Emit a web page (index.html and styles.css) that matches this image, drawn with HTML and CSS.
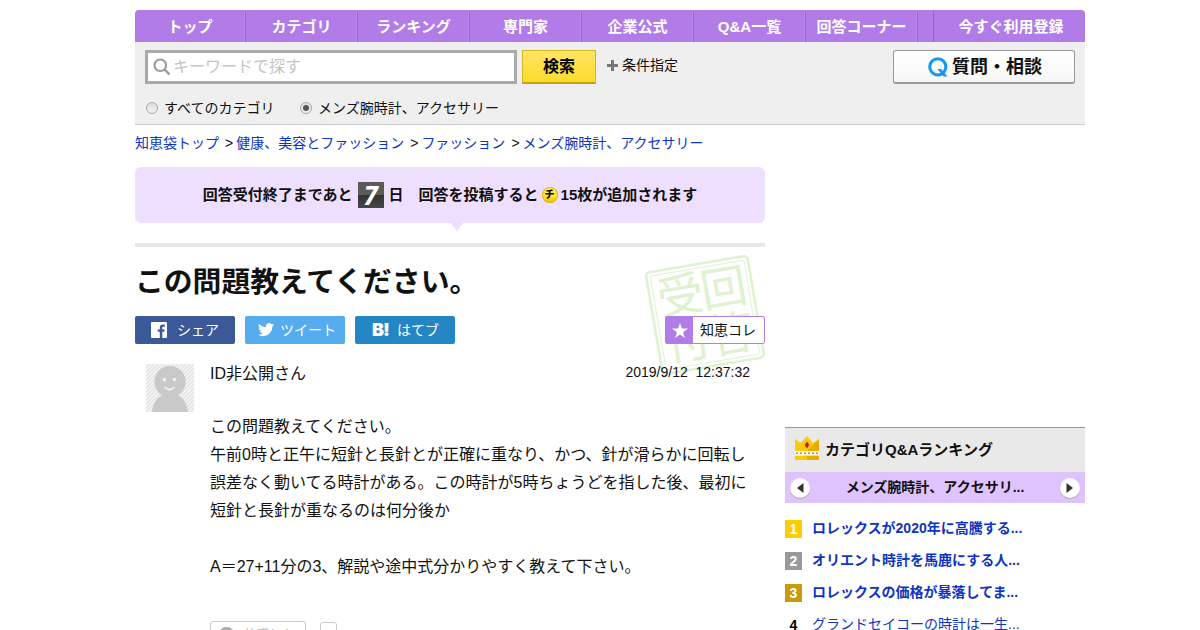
FILE: index.html
```html
<!DOCTYPE html>
<html lang="ja">
<head>
<meta charset="utf-8">
<title>この問題教えてください。</title>
<link rel="stylesheet" href="styles.css">
</head>
<body>
<div class="page">
  <nav class="nav">
    <a>トップ</a><a>カテゴリ</a><a>ランキング</a><a>専門家</a><a>企業公式</a><a>Q&amp;A一覧</a><a>回答コーナー</a>
    <span class="nav-gap"></span>
    <a class="nav-register">今すぐ利用登録</a>
  </nav>
  <section class="search">
    <div class="search-row">
      <div class="search-box">
        <svg width="18" height="18" viewBox="0 0 18 18"><circle cx="7.3" cy="7.3" r="5.8" fill="none" stroke="#999" stroke-width="2"/><path d="M11.5 11.5L16.5 16.5" stroke="#999" stroke-width="2.4"/></svg>
        <span>キーワードで探す</span>
      </div>
      <button class="search-button">検索</button>
      <a class="condition"><svg width="11" height="11"><path d="M5.5 0V11M0 5.5H11" stroke="#777" stroke-width="3"/></svg>条件指定</a>
      <a class="ask"><svg width="20" height="20" viewBox="0 0 20 20"><circle cx="9.8" cy="9.8" r="8.1" fill="none" stroke="#1396f5" stroke-width="3"/><path d="M9.5 12H13L19.5 19.5H15.5Z" fill="#1396f5"/></svg>質問・相談</a>
    </div>
    <div class="scope">
      <label class="scope-all"><i class="radio"></i><span>すべてのカテゴリ</span></label>
      <label><i class="radio checked"></i><span>メンズ腕時計、アクセサリー</span></label>
    </div>
  </section>
  <div class="crumbs"><a>知恵袋トップ</a><i>&gt;</i><a>健康、美容とファッション</a><i>&gt;</i><a>ファッション</a><i>&gt;</i><a>メンズ腕時計、アクセサリー</a></div>
  <div class="columns">
    <main class="main">
      <div class="notice">
        <span>回答受付終了まであと</span><b class="days">7</b><span>日　回答を投稿すると</span><b class="coin">チ</b><span>15枚が追加されます</span>
      </div>
      <article class="question">
        <svg class="stamp" width="122" height="122" viewBox="0 0 122 122">
          <g transform="rotate(-9.7 61 61)" fill="none" stroke="#dff2cf">
            <rect x="9.5" y="9.5" width="103" height="103" rx="4" stroke-width="2.6"/>
            <rect x="13.5" y="13.5" width="95" height="95" rx="2" stroke-width="1"/>
            <g class="stamp-text"><text x="17" y="54">受</text><text x="61" y="54">回</text><text x="17" y="101">付</text><text x="61" y="101">答</text></g>
          </g>
        </svg>
        <h1>この問題教えてください。</h1>
        <div class="share">
          <a class="facebook"><svg width="16" height="16" viewBox="0 0 16 16"><path fill="#fff" d="M1 0H15Q16 0 16 1V15Q16 16 15 16H11.3V9.8H13.4L13.7 7.4H11.3V5.9C11.3 5.2 11.5 4.7 12.5 4.7H13.8V2.5C13.5 2.5 12.8 2.4 11.9 2.4C10 2.4 8.8 3.6 8.8 5.6V7.4H6.7V9.8H8.8V16H1Q0 16 0 15V1Q0 0 1 0Z"/></svg>シェア</a>
          <a class="twitter"><svg width="16" height="14" viewBox="0 2.5 24 20"><path fill="#fff" d="M24 4.6a10 10 0 0 1-2.8.8 5 5 0 0 0 2.1-2.7 10 10 0 0 1-3.1 1.2 4.9 4.9 0 0 0-8.4 4.5A14 14 0 0 1 1.7 3.2a4.9 4.9 0 0 0 1.5 6.5 5 5 0 0 1-2.2-.6v.1a4.9 4.9 0 0 0 3.9 4.8 5 5 0 0 1-2.2.1 4.9 4.9 0 0 0 4.6 3.4A9.9 9.9 0 0 1 0 19.5a14 14 0 0 0 7.5 2.2c9.1 0 14-7.5 14-14v-.6A10 10 0 0 0 24 4.6Z"/></svg>ツイート</a>
          <a class="hatena"><b>B!</b>はてブ</a>
          <a class="collect"><span class="star"><svg width="16" height="15" viewBox="0 0 16 15"><path fill="#fff" d="M8 0L9.9 5.5H16L11.1 9.2L12.9 15L8 11.5L3.1 15L4.9 9.2L0 5.5H6.1Z"/></svg></span><span class="collect-label">知恵コレ</span></a>
        </div>
        <div class="post">
          <svg class="avatar" width="48" height="48" viewBox="0 0 48 48">
            <defs><pattern id="hatch" width="4" height="4" patternUnits="userSpaceOnUse"><rect width="4" height="4" fill="#f4f4f4"/><path d="M-1 1L1 -1M0 4L4 0M3 5L5 3" stroke="#e1e1e1" stroke-width="1.2"/></pattern></defs>
            <rect width="48" height="48" fill="url(#hatch)"/>
            <path fill="#c9c9c9" d="M6 48C7 39 11 34 16 31A15.6 15.6 0 1 1 32 31C37 34 41 39 42 48Z"/>
            <circle cx="18.5" cy="15.5" r="1.7" fill="#f4f4f4"/><circle cx="28.5" cy="15.5" r="1.7" fill="#f4f4f4"/><path d="M18.500 23Q23.500 28 28.500 23" fill="none" stroke="#f4f4f4" stroke-width="1.6"/>
          </svg>
          <div class="post-body">
            <div class="post-head"><span>ID非公開さん</span><time>2019/9/12&nbsp; 12:37:32</time></div>
            <p>この問題教えてください。<br>午前0時と正午に短針と長針とが正確に重なり、かつ、針が滑らかに回転し<br>誤差なく動いてる時計がある。この時計が5時ちょうどを指した後、最初に<br>短針と長針が重なるのは何分後か<br><br>A＝27+11分の3、解説や途中式分かりやすく教えて下さい。</p>
            <div class="reaction"><span class="me-too"><i></i>共感した</span><span class="count"></span></div>
          </div>
        </div>
      </article>
    </main>
    <aside class="side">
      <h2><svg width="24" height="24" viewBox="0 0 24 24"><path fill="#fdc810" d="M0 3L6 7L12 0L18 7L24 3V15H0ZM0 19.5H24V24H0Z"/><path fill="#e8ab00" d="M12 15L24 3V15ZM12 19.5H24V24H12Z"/><path fill="#fff9df" d="M0 15H24V19.5H0Z"/><path d="M1 17.2H23" stroke="#a99545" stroke-width="1.6" stroke-dasharray="2 2"/><path fill="#c71920" d="M12 5.5L14.2 9L12 12.5L9.8 9Z"/></svg>カテゴリQ&amp;Aランキング</h2>
      <div class="switcher">
        <span class="arrow"><svg width="7" height="10"><path d="M6.5 0V10L0 5Z" fill="#333"/></svg></span>
        <strong>メンズ腕時計、アクセサリ...</strong>
        <span class="arrow"><svg width="7" height="10"><path d="M.5 0V10L7 5Z" fill="#333"/></svg></span>
      </div>
      <ol class="ranks">
        <li><b class="gold">1</b><a>ロレックスが2020年に高騰する...</a></li>
        <li><b class="silver">2</b><a>オリエント時計を馬鹿にする人...</a></li>
        <li><b class="bronze">3</b><a>ロレックスの価格が暴落してま...</a></li>
        <li class="plain"><b>4</b><a>グランドセイコーの時計は一生...</a></li>
      </ol>
    </aside>
  </div>
</div>
</body>
</html>
```

FILE: styles.css
```css
* { box-sizing: border-box; }
html { overflow: hidden; }
body {
  margin: 0;
  height: 630px;
  overflow: hidden;
  background: #fff;
  color: #111;
  font: 14px/20px "Liberation Sans", "Noto Sans CJK JP", sans-serif;
}
svg { display: block; flex: none; }
i { font-style: normal; }
.page { width: 950px; margin-left: 135px; padding-top: 10px; }

.nav {
  display: flex;
  height: 32px;
  padding-top: 1px;
  background: #b17be8;
  border-radius: 4px 4px 0 0;
  color: #fff;
  font-size: 15px;
  font-weight: bold;
  line-height: 31px;
  text-align: center;
  white-space: nowrap;
}
.nav a { width: 112px; border-right: 1px solid #9660cf; box-shadow: inset -1px 0 #bd8bee; }
.nav a:first-child { width: 111px; }
.nav-gap { width: 16px; border-right: 1px solid #9660cf; }
.nav .nav-register { flex: 1; padding-left: 3px; border: 0; box-shadow: none; }

.search { height: 83px; padding: 8px 10px 0; background: #efefef; border-bottom: 1px solid #ccc; }
.search-row { display: flex; height: 34px; }
.search-box {
  display: flex;
  align-items: center;
  gap: 2px;
  width: 372px;
  padding-left: 5px;
  background: #fff;
  border: 3px solid #aaa;
  color: #c4c4c4;
  font-size: 16px;
}
.search-button {
  width: 74px;
  margin-left: 5px;
  padding: 0;
  background: linear-gradient(#ffe562, #fddb2c);
  border: 1px solid #d6b51b;
  border-bottom: 2px solid #c6a411;
  color: #000;
  font: bold 16px/31px "Liberation Sans", "Noto Sans CJK JP", sans-serif;
}
.condition { display: flex; align-items: center; gap: 4px; height: 30px; margin-left: 11px; }
.ask {
  display: flex;
  align-items: center;
  justify-content: center;
  gap: 4px;
  width: 182px;
  margin-left: auto;
  padding-left: 2px;
  background: linear-gradient(#fff, #f7f7f7);
  border: 1px solid #999;
  border-bottom-width: 2px;
  border-radius: 3px;
  font-size: 18px;
  font-weight: bold;
}
.scope { display: flex; height: 48px; }
.scope label { display: flex; align-items: center; gap: 6px; padding-left: 1px; }
.scope span { padding-bottom: 1px; }
.scope-all { width: 154px; }
.radio {
  display: flex;
  align-items: center;
  justify-content: center;
  width: 12px;
  height: 12px;
  border: 1px solid #aaa;
  border-radius: 50%;
  background: linear-gradient(#ddd, #f3f3f3);
}
.checked::after { content: ""; width: 6px; height: 6px; border-radius: 50%; background: #555; }

.crumbs { height: 42px; padding-top: 8px; white-space: nowrap; color: #0f35c0; }
.crumbs i { margin: 0 3px 0 6px; color: #111; }

.columns { display: flex; gap: 20px; }
.main { width: 630px; }
.notice {
  position: relative;
  display: flex;
  align-items: center;
  justify-content: center;
  height: 56px;
  background: #eedfff;
  border-radius: 6px;
  font-size: 15px;
  font-weight: bold;
  white-space: nowrap;
}
.notice span { padding-bottom: 1px; }
.notice::after {
  content: "";
  position: absolute;
  top: 55px;
  left: 315px;
  border: solid transparent;
  border-width: 9px 7px 0;
  border-top-color: #eedfff;
}
.days {
  width: 26px;
  height: 26px;
  margin: 0 5px;
  background: linear-gradient(#5b5b5b 50%, #333 50%, #464646);
  color: #fff;
  font: italic bold 26px/26px "Open Sans", sans-serif;
  text-align: center;
}
.coin {
  width: 16px;
  height: 16px;
  margin: 0 3px;
  border-radius: 50%;
  background: linear-gradient(#fff26a, #ffe32a 60%, #e5b600);
  box-shadow: inset 0 0 0 1px #dfb72a;
  font-size: 10px;
  line-height: 15px;
  text-align: center;
}
.question { position: relative; margin-top: 20px; padding-top: 17px; border-top: 4px solid #e7e7e7; }
.stamp { position: absolute; top: 7px; right: -1px; }
.stamp-text {
  fill: #dff2cf;
  stroke: none;
  font: 400 46px "Noto Sans CJK JP", sans-serif;
}
h1 { position: relative; margin: 0; height: 52px; font-size: 28.8px; line-height: 36px; white-space: nowrap; }
.share { position: relative; display: flex; gap: 10px; height: 28px; }
.share > a {
  display: flex;
  align-items: center;
  width: 100px;
  border-radius: 2px;
  color: #fff;
}
.share .facebook { gap: 10px; padding-left: 16px; padding-bottom: 1px; background: #3b5998; }
.share .twitter { gap: 6px; padding-left: 13px; background: #55acee; }
.share .hatena { gap: 7px; padding-left: 17px; background: #2486c5; }
.hatena b { font: 900 18px/26px Inter, "Liberation Sans", sans-serif; letter-spacing: -1px; width: 18px; }
.share .collect { margin-left: auto; background: #fff; border: 1px solid #b17be8; color: #111; }
.star { display: flex; align-items: center; justify-content: center; width: 27px; height: 26px; background: #b17be8; }
.collect-label { padding-left: 7px; }
.post { position: relative; display: flex; gap: 16px; padding: 20px 0 0 11px; }
.post-body { flex: 1; font-size: 16px; }
.post-head { display: flex; justify-content: space-between; padding-right: 15px; line-height: 20px; }
time { font-size: 14px; line-height: 17px; }
p { margin: 29px 0 0; line-height: 28px; white-space: nowrap; }
.reaction { display: flex; gap: 14px; margin-top: 40px; }
.me-too { display: flex; align-items: center; gap: 8px; width: 96px; height: 28px; padding-left: 7px; border: 1px solid #ccc; border-radius: 3px; color: #bbb; font-size: 13px; }
.me-too i { width: 17px; height: 17px; border-radius: 50%; background: #aaa; }
.count { width: 17px; height: 28px; margin-top: 1px; border: 1px solid #ccc; border-radius: 3px; }

.side { width: 300px; padding-top: 260px; }
h2 {
  display: flex;
  align-items: center;
  gap: 6px;
  height: 45px;
  margin: 0;
  padding-left: 10px;
  border-top: 1px solid #999;
  background: #e9e9e9;
  font-size: 15px;
}
h2 svg { position: relative; top: -2px; }
.switcher { display: flex; align-items: center; justify-content: space-between; height: 31px; padding: 0 5px; background: #dfc3ff; }
.switcher strong { padding-bottom: 2px; }
.arrow {
  display: flex;
  align-items: center;
  justify-content: center;
  width: 20px;
  height: 20px;
  border-radius: 50%;
  background: #fff;
  box-shadow: 0 1px 1px #aaa;
}
.ranks { margin: 9px 0 0; padding: 0; list-style: none; }
.ranks li { display: flex; align-items: center; gap: 10px; height: 32px; font-weight: bold; color: #0f35c0; white-space: nowrap; }
.ranks b { width: 17px; height: 18px; margin-top: 2px; color: #fff; line-height: 19px; text-align: center; }
.gold { background: #ffcc00; }
.silver { background: #999; }
.bronze { background: #c99a0c; }
.plain a { font-weight: normal; }
.ranks .plain b { color: #000; }
```
